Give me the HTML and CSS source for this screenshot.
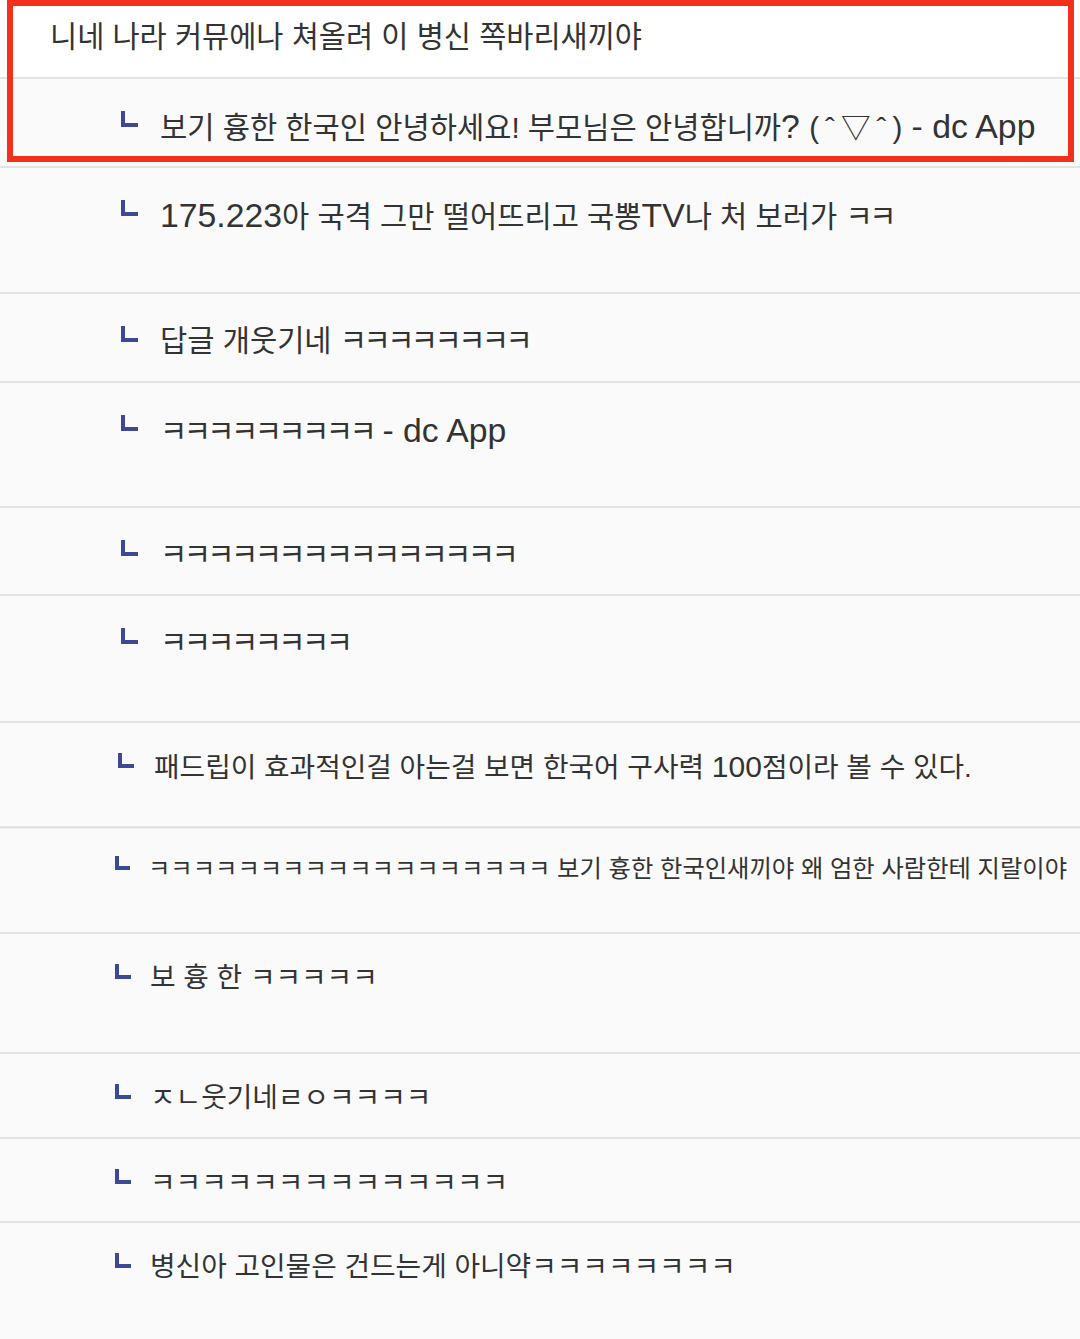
FILE: index.html
```html
<!DOCTYPE html>
<html lang="ko">
<head>
<meta charset="utf-8">
<title>댓글</title>
<link rel="stylesheet" href="styles.css">
</head>
<body>
<div class="list">
  <div class="row root h79"><span class="txt">니네 나라 커뮤에나 쳐올려 이 병신 쪽바리새끼야</span></div>
  <div class="row reply g30 h89"><i class="ln"></i><span class="txt">보기 흉한 한국인 안녕하세요! 부모님은 안녕합니까<span class="lat">? </span><span class="emo">(ˆ▽ˆ)</span><span class="lat"> - dc App</span></span></div>
  <div class="row reply g30 h126"><i class="ln"></i><span class="txt"><span class="lat">175.223</span>아 국격 그만 떨어뜨리고 국뽕<span class="lat">TV</span>나 처 보러가 <span class="kk">ㅋㅋ</span></span></div>
  <div class="row reply g30 h89"><i class="ln"></i><span class="txt">답글 개웃기네 <span class="kk">ㅋㅋㅋㅋㅋㅋㅋㅋ</span></span></div>
  <div class="row reply g30 h125"><i class="ln"></i><span class="txt"><span class="kk">ㅋㅋㅋㅋㅋㅋㅋㅋㅋ</span><span class="lat"> - dc App</span></span></div>
  <div class="row reply g30 h88"><i class="ln"></i><span class="txt"><span class="kk">ㅋㅋㅋㅋㅋㅋㅋㅋㅋㅋㅋㅋㅋㅋㅋ</span></span></div>
  <div class="row reply g30 h127"><i class="ln"></i><span class="txt"><span class="kk">ㅋㅋㅋㅋㅋㅋㅋㅋ</span></span></div>
  <div class="row reply g28 h105"><i class="ln"></i><span class="txt">패드립이 효과적인걸 아는걸 보면 한국어 구사력 <span class="num">100</span>점이라 볼 수 있다.</span></div>
  <div class="row reply g24 h106 dbl"><i class="ln"></i><span class="txt"><span class="kk">ㅋㅋㅋㅋㅋㅋㅋㅋㅋㅋㅋㅋㅋㅋㅋㅋㅋㅋ</span> 보기 흉한 한국인새끼야 왜 엄한 사람한테 지랄이야</span></div>
  <div class="row reply g28b h120"><i class="ln"></i><span class="txt">보 흉 한 <span class="kk">ㅋㅋㅋㅋㅋ</span></span></div>
  <div class="row reply g28b h85"><i class="ln"></i><span class="txt"><span class="kk">ㅈㄴ</span>웃기네<span class="kk">ㄹㅇㅋㅋㅋㅋ</span></span></div>
  <div class="row reply g28b h84"><i class="ln"></i><span class="txt"><span class="kk">ㅋㅋㅋㅋㅋㅋㅋㅋㅋㅋㅋㅋㅋㅋ</span></span></div>
  <div class="row reply g28b h116 last"><i class="ln"></i><span class="txt">병신아 고인물은 건드는게 아니약<span class="kk">ㅋㅋㅋㅋㅋㅋㅋㅋ</span></span></div>
  <div class="highlight"></div>
</div>
</body>
</html>
```
FILE: styles.css
```css
html, body {
  margin: 0;
  padding: 0;
  background: #fafafa;
}
body {
  font-family: "Liberation Sans", "Noto Sans CJK KR", sans-serif;
  color: #333333;
  width: 1080px;
  height: 1339px;
  overflow: hidden;
}
.list {
  position: relative;
  width: 1080px;
}
.row {
  box-sizing: border-box;
  display: flex;
  align-items: flex-start;
  border-bottom: 2px solid #e3e3e3;
  background: #fafafa;
  white-space: nowrap;
}
.row.last { border-bottom: none; }
.row.dbl { border-top: 1px solid #ececec; }
.txt { display: block; }
.lat { font-size: 1.14em; }
.num { font-size: 1.08em; }
.emo { letter-spacing: 6px; margin-right: -6px; }

.root {
  background: #ffffff;
  padding: 17px 0 0 50px;
  font-size: 29.5px;
  line-height: 40px;
}

.ln {
  display: block;
  flex: none;
  box-sizing: border-box;
  width: 17px;
  height: 16px;
  border-left: 4px solid #3d4896;
  border-bottom: 4px solid #3d4896;
}

.g30 { padding: 27px 0 0 121px; font-size: 29.6px; line-height: 40px; }
.g30 .ln { margin: 5px 22px 0 0; }
.g30 .kk { letter-spacing: -0.12em; }
.g28 { padding: 25px 0 0 118px; font-size: 27.8px; line-height: 38px; }
.g28 .ln { margin: 5px 20px 0 0; width: 16px; height: 15px; }
.g24 { padding: 23px 0 0 115px; font-size: 24.3px; line-height: 34px; }
.g24 .ln { margin: 4px 18px 0 0; width: 15px; height: 14px; }
.g28b { padding: 25px 0 0 115px; font-size: 27.8px; line-height: 38px; }
.g28b .ln { margin: 5px 19px 0 0; width: 16px; height: 15px; }

.h79 { height: 79px; }
.h84 { height: 84px; }
.h85 { height: 85px; }
.h88 { height: 88px; }
.h89 { height: 89px; }
.h105 { height: 105px; }
.h106 { height: 106px; }
.h116 { height: 116px; }
.h120 { height: 120px; }
.h125 { height: 125px; }
.h126 { height: 126px; }
.h127 { height: 127px; }

.highlight {
  position: absolute;
  left: 7px;
  top: 0;
  width: 1067px;
  height: 162px;
  box-sizing: border-box;
  border: 6px solid #f3301b;
  pointer-events: none;
}
```
